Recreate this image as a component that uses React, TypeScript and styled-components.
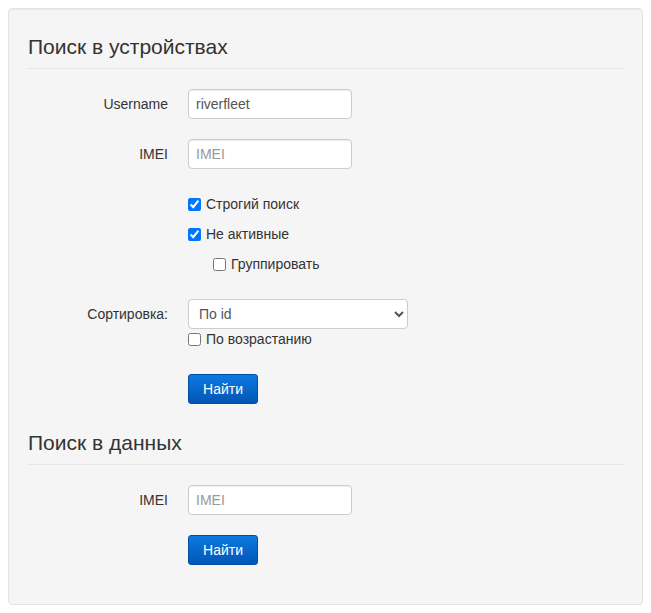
import React, { useState } from 'react'
import styled, { createGlobalStyle } from 'styled-components'

const GlobalStyle = createGlobalStyle`
	body {
		margin: 8px;
		background: #ffffff;
		font-family: 'Liberation Sans', Arial, sans-serif;
		font-size: 14px;
		line-height: 20px;
		color: #333333;
	}
	* {
		box-sizing: border-box;
	}
`

const Well = styled.div`
	background: #f5f5f5;
	border: 1px solid #e3e3e3;
	border-radius: 4px;
	box-shadow: inset 0 1px 1px rgba(0, 0, 0, 0.05);
	padding: 19px;
	min-height: 597px;
`
const Fieldset = styled.fieldset`
	border: 0;
	margin: 0;
	padding: 0;
	min-width: 0;
`
const Legend = styled.legend`
	display: block;
	width: 100%;
	padding: 4px 0 6px;
	margin: 0 0 20px;
	font-size: 21px;
	line-height: 30px;
	color: #333333;
	border-bottom: 1px solid #e5e5e5;
`
const FormGroup = styled.div<{ $gap?: number }>`
	display: grid;
	grid-template-columns: 140px 1fr;
	column-gap: 20px;
	align-items: center;
	margin-bottom: ${p => p.$gap ?? 20}px;
`
const Label = styled.label`
	text-align: right;
	font-size: 14px;
	line-height: 20px;
	color: #333333;
`
const Field = styled.div`
	grid-column: 2;
	display: flex;
	flex-direction: column;
	align-items: flex-start;
`
const TextInput = styled.input`
	width: 164px;
	height: 30px;
	padding: 5px 7px;
	font-family: inherit;
	font-size: 14px;
	color: #555555;
	background: #ffffff;
	border: 1px solid #cccccc;
	border-radius: 4px;
	box-shadow: inset 0 1px 1px rgba(0, 0, 0, 0.075);
	outline: none;

	&::placeholder {
		color: #999999;
	}
`
const Select = styled.select`
	width: 220px;
	height: 30px;
	padding: 0 6px;
	font-family: inherit;
	font-size: 14px;
	color: #555555;
	background: #ffffff;
	border: 1px solid #cccccc;
	border-radius: 4px;
	outline: none;
`
const CheckRow = styled.label<{ $indent?: number; $tall?: boolean }>`
	display: flex;
	align-items: center;
	height: ${p => (p.$tall ? 30 : 20)}px;
	padding-left: ${p => p.$indent ?? 0}px;
	font-size: 14px;
	color: #333333;

	input {
		width: 13px;
		height: 13px;
		margin: 0 5px 0 0;
	}
`
const Button = styled.button`
	width: 70px;
	height: 30px;
	font-family: inherit;
	font-size: 14px;
	color: #ffffff;
	background: linear-gradient(to bottom, #0c7ae2 0%, #0255b5 100%);
	border: 1px solid #024da6;
	border-radius: 3px;
	cursor: pointer;
`

type CheckProps = {
	label: string;
	checked?: boolean;
	indent?: number;
	tall?: boolean;
}

const Check = ({ label, checked, indent, tall }: CheckProps) => {
	const [on, setOn] = useState<boolean>(!!checked)
	return (
		<CheckRow $indent={indent} $tall={tall}>
			<input type='checkbox' checked={on} onChange={() => setOn(!on)} />
			{label}
		</CheckRow>
	)
}

const App = () => {
	const [username, setUsername] = useState('riverfleet')

	return (
		<>
			<GlobalStyle />
			<Well>
				<Fieldset>
					<Legend>Поиск в устройствах</Legend>
					<FormGroup>
						<Label>Username</Label>
						<Field>
							<TextInput value={username} onChange={e => setUsername(e.target.value)} />
						</Field>
					</FormGroup>
					<FormGroup>
						<Label>IMEI</Label>
						<Field>
							<TextInput placeholder='IMEI' />
						</Field>
					</FormGroup>
					<FormGroup>
						<Field>
							<Check tall checked label='Строгий поиск' />
							<Check tall checked label='Не активные' />
							<Check tall indent={25} label='Группировать' />
						</Field>
					</FormGroup>
					<FormGroup $gap={25}>
						<Label>Сортировка:</Label>
						<Field>
							<Select defaultValue='id'>
								<option value='id'>По id</option>
								<option value='username'>По username</option>
								<option value='imei'>По IMEI</option>
							</Select>
						</Field>
						<Field>
							<Check label='По возрастанию' />
						</Field>
					</FormGroup>
					<FormGroup>
						<Field>
							<Button>Найти</Button>
						</Field>
					</FormGroup>
				</Fieldset>
				<Fieldset>
					<Legend>Поиск в данных</Legend>
					<FormGroup>
						<Label>IMEI</Label>
						<Field>
							<TextInput placeholder='IMEI' />
						</Field>
					</FormGroup>
					<FormGroup>
						<Field>
							<Button>Найти</Button>
						</Field>
					</FormGroup>
				</Fieldset>
			</Well>
		</>
	)
}

export default App
